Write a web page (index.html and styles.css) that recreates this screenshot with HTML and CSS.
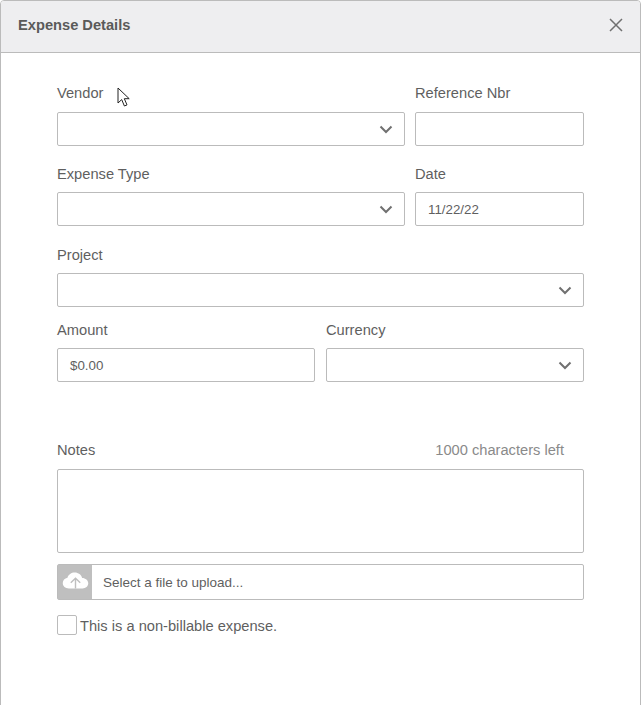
FILE: index.html
```html
<!DOCTYPE html>
<html>
  <head>
    <meta charset="utf-8" />
    <title>Expense Details</title>
    <link rel="stylesheet" href="styles.css">
  </head>
  <body>
    <div class="modal">
      <div class="modal-head">
        <h1>Expense Details</h1>
        <svg class="close" width="14" height="14" viewBox="0 0 14 14">
          <path d="M1 1L13 13M13 1L1 13" />
        </svg>
      </div>
      <div class="modal-body">
        <div class="row row-vendor">
          <div class="field grow">
            <label>Vendor</label>
            <div class="box select">
              <svg class="chev" width="14" height="9" viewBox="0 0 14 9"><path d="M1.5 1.5L7 7L12.5 1.5" /></svg>
            </div>
          </div>
          <div class="field side">
            <label>Reference Nbr</label>
            <div class="box"></div>
          </div>
        </div>
        <div class="row row-type">
          <div class="field grow">
            <label>Expense Type</label>
            <div class="box select">
              <svg class="chev" width="14" height="9" viewBox="0 0 14 9"><path d="M1.5 1.5L7 7L12.5 1.5" /></svg>
            </div>
          </div>
          <div class="field side">
            <label>Date</label>
            <div class="box">11/22/22</div>
          </div>
        </div>
        <div class="row row-project">
          <div class="field grow">
            <label>Project</label>
            <div class="box select">
              <svg class="chev" width="14" height="9" viewBox="0 0 14 9"><path d="M1.5 1.5L7 7L12.5 1.5" /></svg>
            </div>
          </div>
        </div>
        <div class="row row-amount">
          <div class="field half">
            <label>Amount</label>
            <div class="box">$0.00</div>
          </div>
          <div class="field half">
            <label>Currency</label>
            <div class="box select">
              <svg class="chev" width="14" height="9" viewBox="0 0 14 9"><path d="M1.5 1.5L7 7L12.5 1.5" /></svg>
            </div>
          </div>
        </div>
        <div class="notes">
          <div class="notes-head">
            <label>Notes</label>
            <span class="count">1000 characters left</span>
          </div>
          <div class="box area"></div>
        </div>
        <div class="upload">
          <div class="upload-icon">
            <svg width="27" height="17" viewBox="0 0 28 18">
              <path class="cloud" d="M7 17.500C3.200 17.500 .5 15 .5 11.700C.5 8.800 2.600 6.500 5.500 6C6.500 2.700 9.600 .5 13.200 .5C17 .5 20.200 2.900 21 6.300C24.600 6.300 27.500 8.700 27.500 12C27.500 15.200 24.800 17.500 21.500 17.500Z" />
              <path class="arrow" d="M14 17.500V6.500M9 11.500L14 6.500L19 11.500" />
            </svg>
          </div>
          <span>Select a file to upload...</span>
        </div>
        <div class="check">
          <span class="checkbox"></span>
          <span class="check-text">This is a non-billable expense.</span>
        </div>
      </div>
    </div>
    <svg class="cursor" width="15" height="21" viewBox="0 0 15 21">
      <path d="M1 1V16L4.700 12.600L7.400 19L10 17.900L7.300 11.700H12.200Z" />
    </svg>
  </body>
</html>
```

FILE: styles.css
```css
html,
body {
  margin: 0;
  padding: 0;
  background-color: #fff;
}
body {
  height: 705px;
  overflow: hidden;
  font-family: "Liberation Sans", Arial, sans-serif;
  font-size: 14.67px;
  color: #5f5f5f;
}

.modal {
  width: 641px;
  height: 720px;
  box-sizing: border-box;
  border: 1px solid #bbb;
  border-radius: 4px 4px 0 0;
  overflow: hidden;
}
.modal-head {
  display: flex;
  align-items: center;
  justify-content: space-between;
  height: 51px;
  box-sizing: content-box;
  padding: 0 17px 0 17px;
  background-color: #eeeef0;
  border-bottom: 1px solid #bbb;
}
.modal-head h1 {
  margin: 0 0 3px 0;
  font-size: 14.67px;
  font-weight: bold;
  color: #5a5a5a;
}
.close {
  margin-bottom: 3px;
}
.close path {
  fill: none;
  stroke: #707070;
  stroke-width: 1.5;
}

.modal-body {
  padding: 31px 56px 0 56px;
}
.row {
  display: flex;
  gap: 10px;
}
.row-type {
  margin-top: 19px;
}
.row-project {
  margin-top: 20px;
}
.row-amount {
  gap: 11px;
  margin-top: 14px;
}
.field label {
  display: block;
  height: 19px;
  line-height: 19px;
  margin-bottom: 8px;
}
.row-vendor .field label {
  margin-bottom: 9px;
}
.grow {
  flex: 1;
}
.side {
  width: 169px;
}
.half {
  flex: 1;
}
.box {
  display: flex;
  align-items: center;
  height: 34px;
  box-sizing: border-box;
  padding: 0 12px;
  border: 1px solid #bbb;
  border-radius: 2px;
  font-size: 13.33px;
  background-color: #fff;
}
.select {
  justify-content: flex-end;
  padding-right: 11px;
}
.chev path {
  fill: none;
  stroke: #707070;
  stroke-width: 2;
}

.notes {
  margin-top: 59px;
}
.notes-head {
  display: flex;
  justify-content: space-between;
  height: 19px;
  line-height: 19px;
  margin-bottom: 9px;
  padding-right: 20px;
}
.count {
  color: #8a8a8a;
}
.area {
  height: 84px;
}

.upload {
  display: flex;
  align-items: center;
  gap: 11px;
  height: 36px;
  box-sizing: border-box;
  margin-top: 11px;
  border: 1px solid #bbb;
  border-radius: 2px;
  font-size: 13.5px;
}
.upload-icon {
  display: flex;
  align-items: center;
  justify-content: center;
  width: 34px;
  height: 100%;
  background-color: #bfbfbf;
}
.upload-icon svg {
  margin-bottom: 3px;
}
.cloud {
  fill: #fff;
}
.arrow {
  fill: none;
  stroke: #bfbfbf;
  stroke-width: 1.5;
}

.check {
  display: flex;
  align-items: center;
  gap: 3px;
  margin-top: 15px;
}
.check-text {
  padding-top: 1px;
}
.checkbox {
  width: 20px;
  height: 20px;
  box-sizing: border-box;
  border: 1px solid #bbb;
  border-radius: 2px;
}

.cursor {
  position: absolute;
  left: 117px;
  top: 87px;
}
.cursor path {
  fill: #fff;
  stroke: #222;
  stroke-width: 1;
}
```
